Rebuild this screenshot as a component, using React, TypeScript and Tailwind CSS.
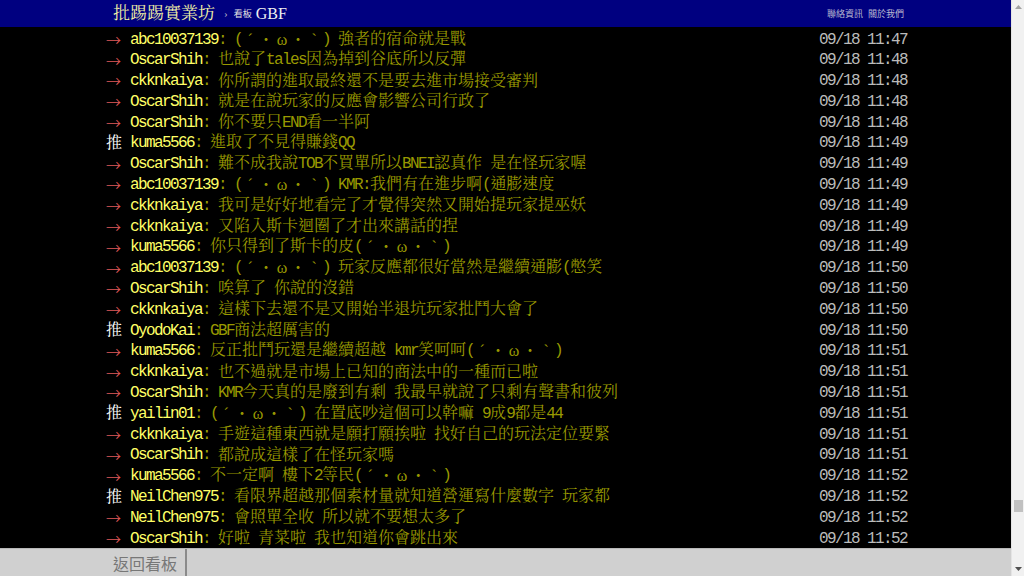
import React from 'react';

type Push = { tag: '推' | '→'; id: string; text: string; time: string };

const pushes: Push[] = [
    { tag: '→', id: 'abc10037139', text: '(´・ω・`) 強者的宿命就是戰', time: '09/18 11:47' },
    { tag: '→', id: 'OscarShih', text: '也說了tales因為掉到谷底所以反彈', time: '09/18 11:48' },
    { tag: '→', id: 'ckknkaiya', text: '你所謂的進取最終還不是要去進市場接受審判', time: '09/18 11:48' },
    { tag: '→', id: 'OscarShih', text: '就是在說玩家的反應會影響公司行政了', time: '09/18 11:48' },
    { tag: '→', id: 'OscarShih', text: '你不要只END看一半阿', time: '09/18 11:48' },
    { tag: '推', id: 'kuma5566', text: '進取了不見得賺錢QQ', time: '09/18 11:49' },
    { tag: '→', id: 'OscarShih', text: '難不成我說TOB不買單所以BNEI認真作 是在怪玩家喔', time: '09/18 11:49' },
    { tag: '→', id: 'abc10037139', text: '(´・ω・`) KMR:我們有在進步啊(通膨速度', time: '09/18 11:49' },
    { tag: '→', id: 'ckknkaiya', text: '我可是好好地看完了才覺得突然又開始提玩家提巫妖', time: '09/18 11:49' },
    { tag: '→', id: 'ckknkaiya', text: '又陷入斯卡迴圈了才出來講話的捏', time: '09/18 11:49' },
    { tag: '→', id: 'kuma5566', text: '你只得到了斯卡的皮(´・ω・`)', time: '09/18 11:49' },
    { tag: '→', id: 'abc10037139', text: '(´・ω・`) 玩家反應都很好當然是繼續通膨(憋笑', time: '09/18 11:50' },
    { tag: '→', id: 'OscarShih', text: '唉算了 你說的沒錯', time: '09/18 11:50' },
    { tag: '→', id: 'ckknkaiya', text: '這樣下去還不是又開始半退坑玩家批鬥大會了', time: '09/18 11:50' },
    { tag: '推', id: 'OyodoKai', text: 'GBF商法超厲害的', time: '09/18 11:50' },
    { tag: '→', id: 'kuma5566', text: '反正批鬥玩還是繼續超越 kmr笑呵呵(´・ω・`)', time: '09/18 11:51' },
    { tag: '→', id: 'ckknkaiya', text: '也不過就是市場上已知的商法中的一種而已啦', time: '09/18 11:51' },
    { tag: '→', id: 'OscarShih', text: 'KMR今天真的是廢到有剩 我最早就說了只剩有聲書和彼列', time: '09/18 11:51' },
    { tag: '推', id: 'yailin01', text: '(´・ω・`) 在置底吵這個可以幹嘛 9成9都是44', time: '09/18 11:51' },
    { tag: '→', id: 'ckknkaiya', text: '手遊這種東西就是願打願挨啦 找好自己的玩法定位要緊', time: '09/18 11:51' },
    { tag: '→', id: 'OscarShih', text: '都說成這樣了在怪玩家嗎', time: '09/18 11:51' },
    { tag: '→', id: 'kuma5566', text: '不一定啊 樓下2等民(´・ω・`)', time: '09/18 11:52' },
    { tag: '推', id: 'NeilChen975', text: '看限界超越那個素材量就知道營運寫什麼數字 玩家都', time: '09/18 11:52' },
    { tag: '→', id: 'NeilChen975', text: '會照單全收 所以就不要想太多了', time: '09/18 11:52' },
    { tag: '→', id: 'OscarShih', text: '好啦 青菜啦 我也知道你會跳出來', time: '09/18 11:52' },
];

const KAO = '(´・ω・`)';

// half-width run: 8px per char like the terminal font
const Half = ({ children }: { children: React.ReactNode }) => (
    <span className="font-['Liberation_Mono',monospace] tracking-[-1.6px] whitespace-pre">{children}</span>
);

const Kao = () => (
    <span className="inline-flex">
        <Half>(</Half>
        <span className="inline-block w-[16px] text-center">´</span>
        <span className="inline-block w-[16px] text-center">・</span>
        <span className="inline-block w-[16px] text-center">ω</span>
        <span className="inline-block w-[16px] text-center">・</span>
        <span className="inline-block w-[16px] text-center">`</span>
        <Half>)</Half>
    </span>
);

const Content = ({ text }: { text: string }) => {
    const parts = text.split(KAO);
    return (
        <span className="text-[#999900] whitespace-pre">
            {parts.map((part, i) => (
                <React.Fragment key={i}>
                    {i > 0 && <Kao />}
                    {part.split(/([\x20-\x7e]+)/).map((seg, j) =>
                        j % 2 === 1 ? <Half key={j}>{seg}</Half> : <span key={j}>{seg}</span>
                    )}
                </React.Fragment>
            ))}
        </span>
    );
};

const App = () => {
    return (
        <div className="flex w-[1024px] h-[576px] overflow-hidden bg-black font-['Liberation_Serif','Noto_Serif_CJK_TC','Noto_Sans_CJK_TC',serif]">
            {/* Page */}
            <div className="flex flex-col flex-1 min-w-0">
                {/* Top bar */}
                <div className="h-[27px] shrink-0 bg-[#000080]">
                    <div className="ml-[106px] w-[801px] h-full flex items-center">
                        <span className="pl-[7px] text-[17px] leading-none text-[#f2f2a6]">批踢踢實業坊</span>
                        <span className="ml-[9px] text-[11px] leading-none text-[#b0b0c8]">›</span>
                        <span className="ml-[6px] text-[9px] leading-none text-[#e0e0e0] font-['Noto_Sans_CJK_TC',sans-serif]">看板</span>
                        <span className="ml-[4px] text-[16px] leading-none text-[#f0f0f0]">GBF</span>
                        <div className="ml-auto mr-[3px] flex gap-[5px] text-[9px] leading-none text-[#b8b8d0] font-['Noto_Sans_CJK_TC',sans-serif]">
                            <span>聯絡資訊</span>
                            <span>關於我們</span>
                        </div>
                    </div>
                </div>

                {/* Pushes */}
                <div className="flex-1 min-h-0 overflow-hidden pt-[2px]">
                    <div className="ml-[106px] w-[801px]">
                        {pushes.map((p, i) => (
                            <div key={i} className="flex items-center h-[20.8px] text-[16px] leading-[20.8px] whitespace-nowrap">
                                {p.tag === '推' ? (
                                    <span className="w-[24px] h-[20.8px] shrink-0 text-white">推</span>
                                ) : (
                                    <span className="w-[24px] h-[20.8px] shrink-0 flex items-center text-[15px] leading-none text-[#e05a5a] font-['Noto_Sans_CJK_TC',sans-serif] font-light">→</span>
                                )}
                                <span className="text-[#ffff66]"><Half>{p.id}</Half></span>
                                <span className="text-[#999900]"><Half>: </Half></span>
                                <Content text={p.text} />
                                <span className="ml-auto text-[#bbbbbb]"><Half>{p.time}</Half></span>
                            </div>
                        ))}
                    </div>
                </div>

                {/* Bottom bar */}
                <div className="h-[28px] shrink-0 bg-[#d0d0d0] border-t border-[#b8b8b8]">
                    <div className="ml-[106px] h-full flex">
                        <div className="h-full flex items-center pl-[7px] pr-[8px] border-r-2 border-[#8a8a8a] text-[16px] text-[#777777] font-['Noto_Sans_CJK_TC',sans-serif]">
                            返回看板
                        </div>
                    </div>
                </div>
            </div>

            {/* Scrollbar */}
            <div className="w-[13px] shrink-0 flex flex-col items-center bg-[#f1f1f1] border-l border-[#e4e4e4]">
                <svg width="7" height="4" viewBox="0 0 7 4" className="mt-[5px]">
                    <path d="M0 4 L3.5 0 L7 4 Z" fill="#a3a3a3" />
                </svg>
                <div className="flex-1" />
                <div className="w-[9px] h-[12px] bg-[#c1c1c1] mb-[55px]" />
                <svg width="7" height="4" viewBox="0 0 7 4" className="mb-[5px]">
                    <path d="M0 0 L7 0 L3.5 4 Z" fill="#505050" />
                </svg>
            </div>
        </div>
    );
};

export default App;
